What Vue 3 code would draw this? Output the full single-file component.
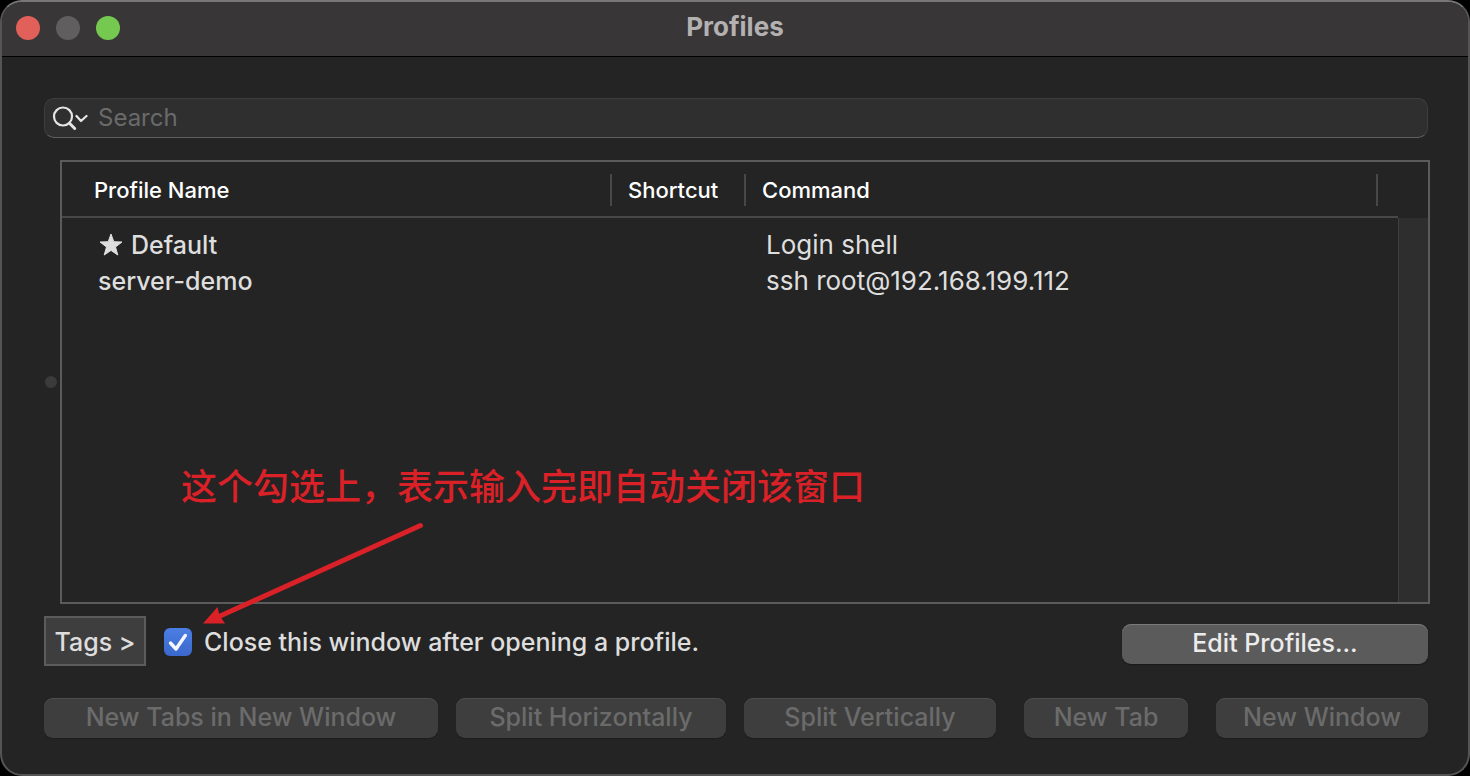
<script setup>
import { ref } from 'vue'

const query = ref('')
const closeAfterOpening = ref(true)

const profiles = [
  { name: 'Default', starred: true, shortcut: '', command: 'Login shell' },
  { name: 'server-demo', starred: false, shortcut: '', command: 'ssh root@192.168.199.112' },
]

const actions = [
  { label: 'New Tabs in New Window', kind: 'open-tabs' },
  { label: 'Split Horizontally', kind: 'split-horizontal' },
  { label: 'Split Vertically', kind: 'split-vertical' },
  { label: 'New Tab', kind: 'open-tab' },
  { label: 'New Window', kind: 'open-window' },
]
</script>

<template>
  <div class="window">
    <header class="titlebar">
      <div class="lights">
        <button class="light close" type="button" aria-label="Close"></button>
        <button class="light minimize" type="button" aria-label="Minimize" disabled></button>
        <button class="light zoom" type="button" aria-label="Zoom"></button>
      </div>
      <h1 class="title">Profiles</h1>
    </header>

    <main class="content">
      <label class="search">
        <svg class="search-icon" width="36" height="26" viewBox="0 0 36 26" fill="none" aria-hidden="true">
          <circle cx="11" cy="11.5" r="9" stroke="#e4e4e4" stroke-width="2.2" />
          <path d="M17.5 18.3 L22.7 23.5" stroke="#e4e4e4" stroke-width="3" stroke-linecap="round" />
          <path d="M24.5 11 L29 16 L34.5 11" stroke="#e4e4e4" stroke-width="2.3" stroke-linecap="round" stroke-linejoin="round" />
        </svg>
        <input v-model="query" class="search-input" type="text" placeholder="Search" aria-label="Search" />
      </label>

      <section class="list-area">
        <div class="divider"><span class="handle"></span></div>
        <div class="panel">
          <table class="profiles">
            <colgroup>
              <col class="col-name" />
              <col class="col-shortcut" />
              <col />
            </colgroup>
            <thead>
              <tr>
                <th scope="col"><span class="heading heading-name">Profile Name</span></th>
                <th scope="col"><span class="heading">Shortcut</span></th>
                <th scope="col"><span class="heading heading-command">Command</span></th>
              </tr>
            </thead>
            <tbody>
              <tr v-for="profile in profiles" :key="profile.name">
                <td class="cell-name">
                  <svg v-if="profile.starred" class="star" width="25" height="24" viewBox="0 0 25 24" aria-label="Default profile">
                    <path d="M13 1 L15.800 8.700 L24 9 L17.500 14 L19.800 22 L13 17.400 L6.200 22 L8.500 14 L2 9 L10.200 8.700 Z" fill="#dedede" stroke="#dedede" stroke-width="1" stroke-linejoin="round" />
                  </svg>
                  <span>{{ profile.name }}</span>
                </td>
                <td>{{ profile.shortcut }}</td>
                <td class="cell-command">{{ profile.command }}</td>
              </tr>
            </tbody>
          </table>
          <div class="scroll-track"></div>
        </div>

        <div class="note">
          <p class="note-text">这个勾选上，表示输入完即自动关闭该窗口</p>
          <svg class="note-arrow" width="224" height="106" viewBox="0 0 224 106" aria-hidden="true">
            <path d="M217.500 6.500 L16 97.500" stroke="#d92127" stroke-width="5" stroke-linecap="round" />
            <path d="M0 104.500 L14.500 88 L16.500 96.500 L22 104.500 Z" fill="#d92127" />
          </svg>
        </div>
      </section>

      <div class="options">
        <button class="tags" type="button">Tags &gt;</button>
        <label class="check">
          <span class="box">
            <input v-model="closeAfterOpening" type="checkbox" />
            <svg v-if="closeAfterOpening" class="tick" width="28" height="28" viewBox="0 0 28 28" fill="none" aria-hidden="true">
              <path d="M6.500 15 L12 21 L21.300 7.500" stroke="#f4f7fd" stroke-width="3.400" stroke-linecap="round" stroke-linejoin="round" />
            </svg>
          </span>
          <span>Close this window after opening a profile.</span>
        </label>
        <button class="push edit" type="button">Edit Profiles...</button>
      </div>

      <div class="actions">
        <button v-for="action in actions" :key="action.kind" :class="['push', action.kind]" type="button" disabled>
          {{ action.label }}
        </button>
      </div>
    </main>
  </div>
</template>

<style>
body {
  background: #000;
}
</style>

<style scoped>
.window {
  box-sizing: border-box;
  min-height: 100vh;
  display: flex;
  flex-direction: column;
  border: 2px solid #555;
  border-top-color: #777;
  border-radius: 22px;
  overflow: hidden;
  background: #242424;
  color: #dedede;
  font-family: Inter, "Liberation Sans", "Noto Sans CJK SC", sans-serif;
  font-size: 25px;
  font-weight: 500;
  line-height: 36px;
}

button,
input {
  font: inherit;
  color: inherit;
  margin: 0;
}

button {
  box-sizing: border-box;
  padding: 0;
  border: 0;
  white-space: nowrap;
}

.titlebar {
  display: grid;
  grid-template-columns: 1fr auto 1fr;
  align-items: center;
  height: 55px;
  box-sizing: border-box;
  padding: 0 14px 2px;
  background: #393637;
  border-bottom: 1px solid #000;
}

.lights {
  display: flex;
  gap: 16px;
}

.light {
  width: 24px;
  height: 24px;
  border-radius: 50%;
}

.close {
  background: #e1605a;
}

.minimize {
  background: #605e5f;
}

.zoom {
  background: #75c950;
}

.title {
  margin: 0;
  padding-bottom: 2px;
  font-size: 26px;
  font-weight: 700;
  color: #b3b1b2;
}

.content {
  flex: 1;
  display: flex;
  flex-direction: column;
  padding: 41px 38px 36px 42px;
}

.search {
  display: flex;
  align-items: center;
  gap: 10px;
  height: 40px;
  box-sizing: border-box;
  margin-right: 2px;
  padding: 0 7px;
  border: 1px solid #3d3d3d;
  border-bottom-color: #606060;
  border-radius: 10px;
  background: #2f2f2f;
}

.search-icon {
  flex: none;
}

.search-input {
  flex: 1;
  min-width: 0;
  height: 36px;
  padding: 0;
  border: 0;
  outline: 0;
  background: transparent;
  font-size: 24px;
  font-weight: 400;
}

.search-input::placeholder {
  color: #6a6a6a;
  opacity: 1;
}

.list-area {
  position: relative;
  flex: 1;
  display: flex;
  gap: 2px;
  margin-top: 22px;
}

.divider {
  flex: none;
  width: 14px;
  display: flex;
  align-items: center;
  justify-content: center;
}

.handle {
  width: 12px;
  height: 12px;
  border-radius: 50%;
  background: #3b3b3b;
}

.panel {
  flex: 1;
  display: grid;
  grid-template-columns: 1fr 30px;
  align-items: start;
  border: 2px solid #5b5b5b;
}

.profiles {
  width: 100%;
  table-layout: fixed;
  border-collapse: separate;
  border-spacing: 0;
}

.col-name {
  width: 550px;
}

.col-shortcut {
  width: 134px;
}

th {
  padding: 12px 0 10px;
  border-bottom: 2px solid #484848;
  text-align: left;
  font-size: 22px;
  font-weight: 500;
  color: #fff;
}

.heading {
  display: block;
  height: 32px;
  line-height: 32px;
  padding-left: 16px;
  border-right: 2px solid #484848;
}

.heading-name {
  padding-left: 32px;
}

.heading-command {
  margin-right: 20px;
}

td {
  padding: 0;
  height: 36px;
}

tbody tr:first-child td {
  padding-top: 9px;
}

.cell-name {
  padding-left: 36px;
}

.cell-command {
  padding-left: 20px;
  font-size: 26px;
  font-weight: 400;
}

.star {
  margin-right: 8px;
  vertical-align: -3px;
}

.scroll-track {
  align-self: stretch;
  margin-top: 56px;
  border-left: 1px solid #3e3e3e;
  background: #2e2e2e;
}

.note {
  position: absolute;
  left: 137px;
  bottom: -21px;
  color: #d92127;
  pointer-events: none;
}

.note-text {
  margin: 0;
  font-family: "Noto Sans CJK SC", sans-serif;
  font-size: 36px;
  font-weight: 500;
  line-height: 52px;
  white-space: nowrap;
}

.note-arrow {
  display: block;
  margin: 9px 0 0 22px;
}

.options {
  display: flex;
  align-items: center;
  gap: 18px;
  margin: 12px 2px 0 0;
}

.tags {
  width: 102px;
  height: 50px;
  padding-top: 2px;
  border: 2px solid #5c5c5c;
  background: #3e3e3e;
}

.check {
  flex: 1;
  display: flex;
  align-items: center;
  gap: 12px;
  padding-top: 2px;
}

.box {
  position: relative;
  flex: none;
  width: 28px;
  height: 28px;
}

.box input {
  display: block;
  appearance: none;
  width: 28px;
  height: 28px;
  border-radius: 6px;
  background: #555;
}

.box input:checked {
  background: linear-gradient(#4b7ee3, #3b68cd);
}

.tick {
  position: absolute;
  inset: 0;
  pointer-events: none;
}

.push {
  height: 40px;
  padding-bottom: 2px;
  border-radius: 9px;
  background: #5b5b5b;
  box-shadow: inset 0 1px 0 #7a7a7a, 0 1px 1px #1a1a1a;
}

.push:disabled {
  background: #3e3e3e;
  box-shadow: inset 0 1px 0 #4d4d4d, 0 1px 1px #1e1e1e;
  color: #6b6b6b;
}

.edit {
  align-self: flex-end;
  width: 306px;
  margin-bottom: 2px;
  color: #ececec;
}

.actions {
  display: flex;
  gap: 18px;
  margin: 32px 2px 0 0;
}

.open-tabs {
  flex: 394 1 0;
}

.split-horizontal {
  flex: 270 1 0;
}

.split-vertical {
  flex: 252 1 0;
}

.open-tab {
  flex: 164 1 0;
  margin: 0 10px;
}

.open-window {
  flex: 212 1 0;
}
</style>
